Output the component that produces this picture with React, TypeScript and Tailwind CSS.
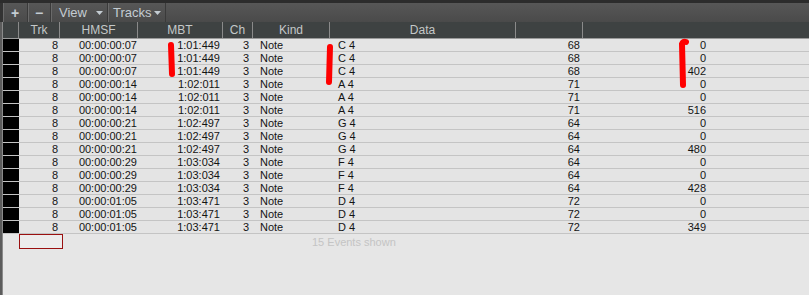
import React from 'react';

type Row = [string, string, string, string, string, string, string, string];

const rows: Row[] = [
  ['8', '00:00:00:07', '1:01:449', '3', 'Note', 'C 4', '68', '0'],
  ['8', '00:00:00:07', '1:01:449', '3', 'Note', 'C 4', '68', '0'],
  ['8', '00:00:00:07', '1:01:449', '3', 'Note', 'C 4', '68', '402'],
  ['8', '00:00:00:14', '1:02:011', '3', 'Note', 'A 4', '71', '0'],
  ['8', '00:00:00:14', '1:02:011', '3', 'Note', 'A 4', '71', '0'],
  ['8', '00:00:00:14', '1:02:011', '3', 'Note', 'A 4', '71', '516'],
  ['8', '00:00:00:21', '1:02:497', '3', 'Note', 'G 4', '64', '0'],
  ['8', '00:00:00:21', '1:02:497', '3', 'Note', 'G 4', '64', '0'],
  ['8', '00:00:00:21', '1:02:497', '3', 'Note', 'G 4', '64', '480'],
  ['8', '00:00:00:29', '1:03:034', '3', 'Note', 'F 4', '64', '0'],
  ['8', '00:00:00:29', '1:03:034', '3', 'Note', 'F 4', '64', '0'],
  ['8', '00:00:00:29', '1:03:034', '3', 'Note', 'F 4', '64', '428'],
  ['8', '00:00:01:05', '1:03:471', '3', 'Note', 'D 4', '72', '0'],
  ['8', '00:00:01:05', '1:03:471', '3', 'Note', 'D 4', '72', '0'],
  ['8', '00:00:01:05', '1:03:471', '3', 'Note', 'D 4', '72', '349'],
];

const Arrow = () => (
  <svg width="7" height="4" viewBox="0 0 7 4" className="ml-auto">
    <path d="M0 0 L7 0 L3.5 4 Z" fill="#c4ccd2" />
  </svg>
);

const ToolButton = ({ children, className }: { children: React.ReactNode; className: string }) => (
  <div className={`flex items-center h-full border-r border-[#3a3a3a] shadow-[inset_1px_0_0_#6a6a6a] ${className}`}>
    {children}
  </div>
);

const headers = [
  { label: 'Trk', w: 'w-[41px]' },
  { label: 'HMSF', w: 'w-[78px]' },
  { label: 'MBT', w: 'w-[85px]' },
  { label: 'Ch', w: 'w-[30px]' },
  { label: 'Kind', w: 'w-[77px]' },
  { label: 'Data', w: 'w-[186px]' },
  { label: '', w: 'w-[67px]' },
];

export default function App() {
  return (
    <div
      className="relative w-[809px] h-[295px] overflow-hidden bg-[#e6e6e6] text-[11px]"
      style={{ fontFamily: '"Liberation Sans", Arial, sans-serif' }}
    >
      {/* toolbar */}
      <div className="h-[22px] bg-[#2c2c2c] pt-[3px]">
        <div className="flex h-[19px] bg-gradient-to-b from-[#575757] to-[#4a4a4a] text-[#c4ccd2] text-[13px] border-l-[3px] border-[#333]">
          <ToolButton className="w-[25px] justify-center">
            <span className="font-bold text-[14px] leading-none">+</span>
          </ToolButton>
          <ToolButton className="w-[23px] justify-center">
            <span className="font-bold text-[14px] leading-none">−</span>
          </ToolButton>
          <ToolButton className="w-[57px] pl-[8px] pr-[4px]">
            <span>View</span>
            <Arrow />
          </ToolButton>
          <ToolButton className="w-[58px] pl-[5px] pr-[4px]">
            <span>Tracks</span>
            <Arrow />
          </ToolButton>
        </div>
      </div>

      <div className="flex h-[273px]">
        {/* left frame */}
        <div className="w-[3px] h-full bg-[#5c5c5c] border-r border-[#8a8a8a]" />

        <div className="flex-1 flex flex-col">
          {/* header */}
          <div className="flex h-[17px] bg-[#3e4242] border-b border-[#9a9a9a] text-[#c4c8c8] text-[12px] leading-[16px]">
            <div className="w-[16px] border-r border-[#8a8a8a]" />
            {headers.map((h, i) => (
              <div key={i} className={`${h.w} text-center border-r border-[#8a8a8a]`}>
                {h.label}
              </div>
            ))}
            <div className="flex-1" />
          </div>

          {/* rows */}
          {rows.map((r, i) => (
            <div key={i} className="flex h-[13px] leading-[12px] text-[#141414] border-b border-[#c4c4c4] bg-[#e4e4e4]">
              <div className="w-[16px] bg-black" />
              <div className="w-[41px] text-right pr-[2px]">{r[0]}</div>
              <div className="w-[78px] text-right pr-[1px]">{r[1]}</div>
              <div className="w-[85px] text-right pr-[3px]">{r[2]}</div>
              <div className="w-[30px] text-right pr-[4px]">{r[3]}</div>
              <div className="w-[77px] pl-[7px]">{r[4]}</div>
              <div className="w-[186px] pl-[8px]">{r[5]}</div>
              <div className="w-[67px] text-right pr-[3px]">{r[6]}</div>
              <div className="w-[125px] text-right pr-[2px]">{r[7]}</div>
              <div className="flex-1" />
            </div>
          ))}

          {/* footer */}
          <div className="flex h-[15px] items-start">
            <div className="w-[16px]" />
            <div className="w-[44px] h-[15px] border border-[#9a1010] bg-[#ececec]" />
            <div className="pl-[249px] leading-[16px] text-[#c4c4c4]">15 Events shown</div>
          </div>
        </div>
      </div>

      {/* red annotation marks */}
      <svg className="absolute left-0 top-0 pointer-events-none" width="809" height="295">
        <g stroke="#ff0000" strokeWidth="6" strokeLinecap="round" fill="none">
          <path d="M171 45 L172 74" />
          <path d="M330 47 L329 82" />
          <path d="M683 85 L682 44 Q683 41 686 42" />
        </g>
      </svg>
    </div>
  );
}
